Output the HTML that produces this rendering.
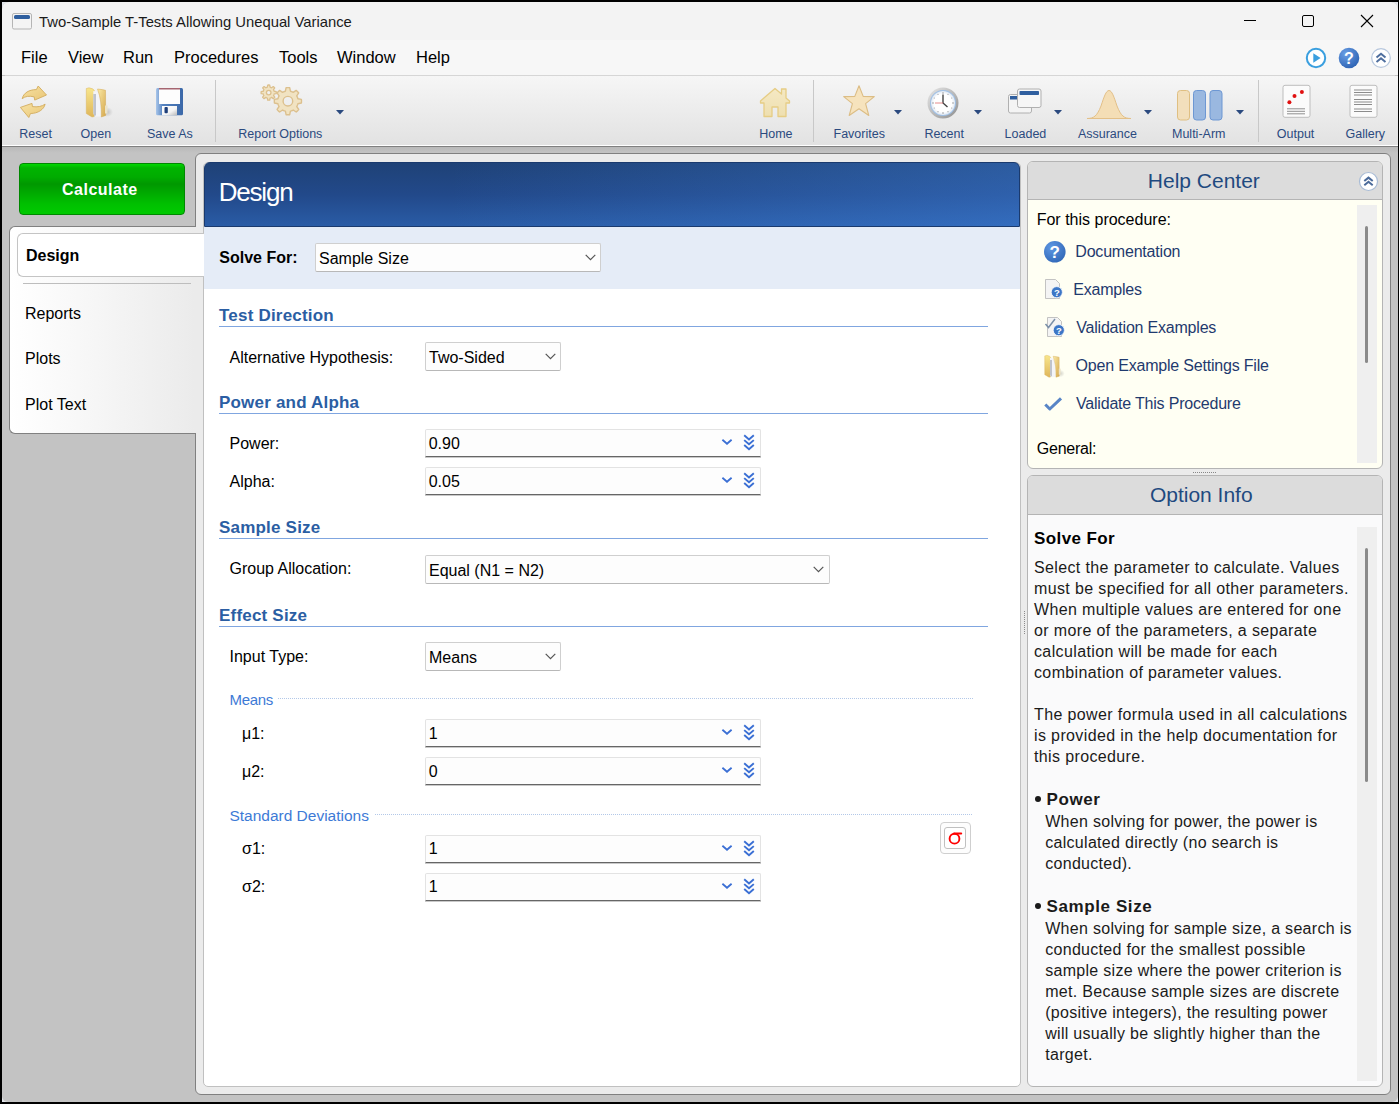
<!DOCTYPE html>
<html><head><meta charset="utf-8">
<style>
*{margin:0;padding:0;box-sizing:border-box}
html,body{width:1399px;height:1104px;overflow:hidden;background:#000}
body{font-family:"Liberation Sans",sans-serif;position:relative;color:#000}
.a{position:absolute}
.t{position:absolute;white-space:nowrap;line-height:1}
svg{overflow:visible}
</style></head><body>
<div class="a" style="left:2px;top:2px;width:1396px;height:1100px;background:#e2e5ea"></div>
<div class="a" style="left:2px;top:2px;width:1396px;height:1100px;background:#c3c3c3;border-top-left-radius:7px;border-top-right-radius:7px;border-bottom-left-radius:6px;border-bottom-right-radius:6px"></div>
<div class="a" style="left:2px;top:2px;width:1396px;height:38px;background:#f3f3f3;border-top-left-radius:7px;border-top-right-radius:7px"></div>
<div class="a" style="left:2px;top:40px;width:1396px;height:35px;background:#f7f7f7"></div>
<div class="a" style="left:5px;top:75px;width:1390px;height:1px;background:#d6d6d6"></div>
<div class="a" style="left:2px;top:76px;width:1396px;height:69px;background:linear-gradient(#f6f6f6,#e2e2e2)"></div>
<div class="a" style="left:2px;top:145px;width:1396px;height:1px;background:#ffffff"></div>
<div class="a" style="left:2px;top:146px;width:1396px;height:1px;background:#808080"></div>
<div class="a" style="left:2px;top:147px;width:1396px;height:6px;background:linear-gradient(#b9b9b9,#c3c3c3)"></div>
<div class="a" style="left:215px;top:80px;width:1px;height:62px;background:#c8c8c8"></div>
<div class="a" style="left:813px;top:80px;width:1px;height:62px;background:#c8c8c8"></div>
<div class="a" style="left:1258px;top:80px;width:1px;height:62px;background:#c8c8c8"></div>
<div class="t" style="left:39px;top:15.00px;font-size:14.8px;color:#1a1a1a;">Two-Sample T-Tests Allowing Unequal Variance</div>
<svg class="a" style="left:12px;top:13px" width="20" height="17" viewBox="0 0 20 17"><rect x="0.5" y="0.5" width="19" height="15.5" rx="1.5" fill="#f4f4f4" stroke="#b5b5b5"/><rect x="2" y="2" width="16" height="4" rx="1.5" fill="#2f5f9f"/></svg>
<div class="a" style="left:1244px;top:20px;width:12px;height:1px;background:#000"></div>
<div class="a" style="left:1302px;top:15px;width:12px;height:12px;border:1px solid #000;border-radius:2px"></div>
<svg class="a" style="left:1360px;top:14px" width="14" height="14" viewBox="0 0 14 14"><path d="M1 1L13 13M13 1L1 13" stroke="#000" stroke-width="1.1"/></svg>
<div class="t" style="left:21px;top:49.00px;font-size:16.5px;color:#000;">File</div>
<div class="t" style="left:68px;top:49.00px;font-size:16.5px;color:#000;">View</div>
<div class="t" style="left:123px;top:49.00px;font-size:16.5px;color:#000;">Run</div>
<div class="t" style="left:174px;top:49.00px;font-size:16.5px;color:#000;">Procedures</div>
<div class="t" style="left:279px;top:49.00px;font-size:16.5px;color:#000;">Tools</div>
<div class="t" style="left:337px;top:49.00px;font-size:16.5px;color:#000;">Window</div>
<div class="t" style="left:416px;top:49.00px;font-size:16.5px;color:#000;">Help</div>
<svg class="a" style="left:1305px;top:47px" width="22" height="22" viewBox="0 0 22 22"><circle cx="11" cy="11" r="9.2" fill="#fff" stroke="#3a9fdf" stroke-width="2"/><path d="M8.3 6.3L15.6 11L8.3 15.7Z" fill="#3a9fdf"/></svg>
<svg class="a" style="left:1338px;top:47px" width="22" height="22" viewBox="0 0 22 22"><defs><radialGradient id="hg" cx="0.35" cy="0.3" r="0.8"><stop offset="0" stop-color="#6a9fe6"/><stop offset="1" stop-color="#2a5fb0"/></radialGradient></defs><circle cx="11" cy="11" r="10.3" fill="url(#hg)"/><text x="11" y="16.5" text-anchor="middle" font-family="Liberation Sans" font-weight="bold" font-size="16" fill="#fff">?</text></svg>
<svg class="a" style="left:1370px;top:47px" width="22" height="22" viewBox="0 0 22 22"><circle cx="11" cy="11" r="9.3" fill="#fff" stroke="#b7c7dd" stroke-width="1.2"/><path d="M6.5 10.5L11 6.8L15.5 10.5M6.5 15L11 11.3L15.5 15" fill="none" stroke="#4f6f9f" stroke-width="2"/></svg>
<div class="t" style="left:19.3px;top:128.00px;font-size:12.5px;color:#2b4a7f;">Reset</div>
<div class="t" style="left:80.5px;top:128.00px;font-size:12.5px;color:#2b4a7f;">Open</div>
<div class="t" style="left:147px;top:128.00px;font-size:12.5px;color:#2b4a7f;">Save As</div>
<div class="t" style="left:238.3px;top:128.00px;font-size:12.5px;color:#2b4a7f;">Report Options</div>
<div class="t" style="left:759.2px;top:128.00px;font-size:12.5px;color:#2b4a7f;">Home</div>
<div class="t" style="left:833.5px;top:128.00px;font-size:12.5px;color:#2b4a7f;">Favorites</div>
<div class="t" style="left:924.4px;top:128.00px;font-size:12.5px;color:#2b4a7f;">Recent</div>
<div class="t" style="left:1004.6px;top:128.00px;font-size:12.5px;color:#2b4a7f;">Loaded</div>
<div class="t" style="left:1077.9px;top:128.00px;font-size:12.5px;color:#2b4a7f;">Assurance</div>
<div class="t" style="left:1172px;top:128.00px;font-size:12.5px;color:#2b4a7f;">Multi-Arm</div>
<div class="t" style="left:1276.8px;top:128.00px;font-size:12.5px;color:#2b4a7f;">Output</div>
<div class="t" style="left:1345.5px;top:128.00px;font-size:12.5px;color:#2b4a7f;">Gallery</div>
<svg class="a" style="left:336px;top:109.5px" width="8" height="5" viewBox="0 0 8 5"><path d="M0 0H8L4 4.5Z" fill="#2b4a7f"/></svg>
<svg class="a" style="left:893.5px;top:109.5px" width="8" height="5" viewBox="0 0 8 5"><path d="M0 0H8L4 4.5Z" fill="#2b4a7f"/></svg>
<svg class="a" style="left:973.6px;top:109.5px" width="8" height="5" viewBox="0 0 8 5"><path d="M0 0H8L4 4.5Z" fill="#2b4a7f"/></svg>
<svg class="a" style="left:1053.6px;top:109.5px" width="8" height="5" viewBox="0 0 8 5"><path d="M0 0H8L4 4.5Z" fill="#2b4a7f"/></svg>
<svg class="a" style="left:1143.6px;top:109.5px" width="8" height="5" viewBox="0 0 8 5"><path d="M0 0H8L4 4.5Z" fill="#2b4a7f"/></svg>
<svg class="a" style="left:1236px;top:109.5px" width="8" height="5" viewBox="0 0 8 5"><path d="M0 0H8L4 4.5Z" fill="#2b4a7f"/></svg>
<svg class="a" style="left:15px;top:82px" width="40" height="40" viewBox="0 0 40 40">
<defs><linearGradient id="rg" x1="0" y1="0" x2="1" y2="1"><stop offset="0" stop-color="#f7e2a4"/><stop offset="1" stop-color="#e9c676"/></linearGradient></defs>
<path d="M7.2 16.7C8.5 11 14 7.6 21.4 7.6L23.2 4L31.5 13L19.7 18.1L19.2 14.9C14.5 13.6 10 14.2 7.2 16.7Z" fill="url(#rg)" stroke="#d2ac5c" stroke-width="0.9" stroke-linejoin="round"/>
<path d="M30.1 22.1C29 27.5 23 31.5 15.5 31.5L13.8 35.5L5.4 25.4L17 21.4L17.4 24.6C22.5 25.3 27 24.5 30.1 22.1Z" fill="url(#rg)" stroke="#d2ac5c" stroke-width="0.9" stroke-linejoin="round"/>
</svg>
<svg class="a" style="left:80px;top:82px" width="40" height="40" viewBox="0 0 40 40">
<defs><linearGradient id="fg1" x1="0" y1="0" x2="0" y2="1"><stop offset="0" stop-color="#f8e68c"/><stop offset="1" stop-color="#dfb65a"/></linearGradient>
<linearGradient id="fg2" x1="0" y1="0" x2="1" y2="1"><stop offset="0" stop-color="#fbeaa6"/><stop offset="1" stop-color="#d5a84e"/></linearGradient>
<radialGradient id="fsh" cx="0.5" cy="0.5" r="0.5"><stop offset="0" stop-color="#000" stop-opacity="0.18"/><stop offset="1" stop-color="#000" stop-opacity="0"/></radialGradient></defs>
<ellipse cx="27" cy="30" rx="6" ry="5" fill="url(#fsh)"/>
<path d="M6.3 6.5L9 5.8Q13.5 6.5 14.3 8.5L14.3 34.5L12 35L6.3 31.5Z" fill="url(#fg1)" stroke="#d9b35e" stroke-width="0.5"/>
<path d="M13.3 9Q17.5 9 19.5 12.5L21 34.5L14.5 34.5L13.3 31Z" fill="#f3f4f8"/>
<path d="M13.3 12L16 12L16 33L14.5 34.5L13.3 31Z" fill="#bfc3cc"/>
<path d="M17.5 7Q23.5 7.6 25.5 8.3L25.7 33.5L21.3 35Q22 19 17.5 7Z" fill="url(#fg2)" stroke="#d2a955" stroke-width="0.5"/>
<rect x="25" y="23.5" width="2.5" height="8" fill="#ece3c8"/>
</svg>
<svg class="a" style="left:155px;top:87px" width="29" height="30" viewBox="0 0 29 30">
<defs><linearGradient id="sg" x1="0" y1="0" x2="1" y2="0"><stop offset="0" stop-color="#a9c6ea"/><stop offset="0.25" stop-color="#5583c0"/><stop offset="1" stop-color="#3b68a8"/></linearGradient>
<linearGradient id="shg" x1="0" y1="0" x2="1" y2="1"><stop offset="0" stop-color="#ffffff"/><stop offset="0.6" stop-color="#f4f4f4"/><stop offset="1" stop-color="#b8b8b8"/></linearGradient></defs>
<path d="M1 2.5Q1 1 2.5 1H26.5Q28 1 28 2.5V26.8Q28 28.3 26.5 28.3H2.5Q1 28.3 1 26.8Z" fill="url(#sg)"/>
<rect x="4" y="1" width="21" height="16" fill="#fdfdfd"/>
<rect x="4" y="1" width="21" height="1.5" fill="#a56570"/>
<rect x="7" y="19" width="15" height="9.3" fill="url(#shg)"/>
<rect x="9.5" y="20" width="3.3" height="6.2" rx="1" fill="#1e3f7a"/>
</svg>
<svg class="a" style="left:250px;top:78px" width="60" height="45" viewBox="0 0 60 45"><path d="M17.70 7.07 L18.22 7.02 L19.18 7.02 L19.70 7.07 L20.06 9.17 L20.59 9.33 L21.09 9.54 L21.58 9.80 L23.32 8.56 L23.72 8.89 L24.41 9.58 L24.74 9.98 L23.50 11.72 L23.76 12.21 L23.97 12.71 L24.13 13.24 L26.23 13.60 L26.28 14.12 L26.28 15.08 L26.23 15.60 L24.13 15.96 L23.97 16.49 L23.76 16.99 L23.50 17.48 L24.74 19.22 L24.41 19.62 L23.72 20.31 L23.32 20.64 L21.58 19.40 L21.09 19.66 L20.59 19.87 L20.06 20.03 L19.70 22.13 L19.18 22.18 L18.22 22.18 L17.70 22.13 L17.34 20.03 L16.81 19.87 L16.31 19.66 L15.82 19.40 L14.08 20.64 L13.68 20.31 L12.99 19.62 L12.66 19.22 L13.90 17.48 L13.64 16.99 L13.43 16.49 L13.27 15.96 L11.17 15.60 L11.12 15.08 L11.12 14.12 L11.17 13.60 L13.27 13.24 L13.43 12.71 L13.64 12.21 L13.90 11.72 L12.66 9.98 L12.99 9.58 L13.68 8.89 L14.08 8.56 L15.82 9.80 L16.31 9.54 L16.81 9.33 L17.34 9.17Z M21.00 14.60 A2.3 2.3 0 1 0 16.40 14.60 A2.3 2.3 0 1 0 21.00 14.60Z" fill="#f1e3c2" fill-rule="evenodd" stroke="#dcc08e" stroke-width="1.3" stroke-linejoin="round"/><path d="M36.10 9.72 L37.03 9.63 L38.77 9.63 L39.70 9.72 L40.40 13.21 L41.37 13.50 L42.30 13.89 L43.20 14.37 L46.16 12.40 L46.88 12.99 L48.11 14.22 L48.70 14.94 L46.73 17.90 L47.21 18.80 L47.60 19.73 L47.89 20.70 L51.38 21.40 L51.47 22.33 L51.47 24.07 L51.38 25.00 L47.89 25.70 L47.60 26.67 L47.21 27.60 L46.73 28.50 L48.70 31.46 L48.11 32.18 L46.88 33.41 L46.16 34.00 L43.20 32.03 L42.30 32.51 L41.37 32.90 L40.40 33.19 L39.70 36.68 L38.77 36.77 L37.03 36.77 L36.10 36.68 L35.40 33.19 L34.43 32.90 L33.50 32.51 L32.60 32.03 L29.64 34.00 L28.92 33.41 L27.69 32.18 L27.10 31.46 L29.07 28.50 L28.59 27.60 L28.20 26.67 L27.91 25.70 L24.42 25.00 L24.33 24.07 L24.33 22.33 L24.42 21.40 L27.91 20.70 L28.20 19.73 L28.59 18.80 L29.07 17.90 L27.10 14.94 L27.69 14.22 L28.92 12.99 L29.64 12.40 L32.60 14.37 L33.50 13.89 L34.43 13.50 L35.40 13.21Z M42.70 23.20 A4.8 4.8 0 1 0 33.10 23.20 A4.8 4.8 0 1 0 42.70 23.20Z" fill="#f1e3c2" fill-rule="evenodd" stroke="#dcc08e" stroke-width="1.4" stroke-linejoin="round"/></svg>
<svg class="a" style="left:759px;top:87px" width="33" height="32" viewBox="0 0 33 32">
<defs><linearGradient id="hmg" x1="0" y1="0" x2="0" y2="1"><stop offset="0" stop-color="#f5e9c4"/><stop offset="1" stop-color="#eedfb0"/></linearGradient></defs>
<path d="M1.5 14L16 1.5L22.5 7V2H27V11L30.5 14V16H27V29.5H19V20H13V29.5H5V16H1.5Z" fill="url(#hmg)" stroke="#e6cd85" stroke-width="1.3" stroke-linejoin="round"/>
</svg>
<svg class="a" style="left:842px;top:84px" width="34" height="34" viewBox="0 0 34 34">
<path d="M17 1.8L21.2 12.4L32.3 12.6L23.6 19.6L26.8 31.5L17 24.8L7.2 31.5L10.4 19.6L1.7 12.6L12.8 12.4Z" fill="#f6e3bd" stroke="#dcbd85" stroke-width="1.1" stroke-linejoin="round"/>
</svg>
<svg class="a" style="left:926px;top:86px" width="34" height="34" viewBox="0 0 34 34">
<defs><radialGradient id="cg" cx="0.5" cy="0.5" r="0.5"><stop offset="0.75" stop-color="#ffffff"/><stop offset="1" stop-color="#dfe8f3"/></radialGradient>
<linearGradient id="crg" x1="0" y1="0" x2="1" y2="1"><stop offset="0" stop-color="#e8e8e8"/><stop offset="1" stop-color="#8e8e8e"/></linearGradient></defs>
<circle cx="17" cy="17" r="15.5" fill="url(#crg)"/>
<circle cx="17" cy="17" r="13" fill="#9fc0e6"/>
<circle cx="17" cy="17" r="12" fill="url(#cg)"/>
<g fill="#9a9a9a"><circle cx="17" cy="7" r="0.8"/><circle cx="27" cy="17" r="0.8"/><circle cx="17" cy="27" r="0.8"/><circle cx="7" cy="17" r="0.8"/><circle cx="22" cy="8.3" r="0.6"/><circle cx="25.7" cy="12" r="0.6"/><circle cx="25.7" cy="22" r="0.6"/><circle cx="22" cy="25.7" r="0.6"/><circle cx="12" cy="25.7" r="0.6"/><circle cx="8.3" cy="22" r="0.6"/><circle cx="8.3" cy="12" r="0.6"/><circle cx="12" cy="8.3" r="0.6"/></g>
<path d="M17 8.5V17L21.5 21" fill="none" stroke="#444" stroke-width="1.4"/>
<path d="M17 17H9" stroke="#e07070" stroke-width="0.8"/>
</svg>
<svg class="a" style="left:1007px;top:88px" width="36" height="27" viewBox="0 0 36 27">
<rect x="1.5" y="6.5" width="23" height="18.5" rx="2" fill="#f4f4f4" stroke="#b0b0b0" stroke-width="1"/>
<rect x="3" y="8" width="20" height="3.5" fill="#2f5f9f"/>
<rect x="10.5" y="1" width="23.5" height="18.5" rx="2" fill="#f6f6f6" stroke="#b0b0b0" stroke-width="1"/>
<rect x="12.5" y="3" width="19.5" height="4" rx="0.8" fill="#2f5f9f"/>
</svg>
<svg class="a" style="left:1086px;top:89px" width="46" height="31" viewBox="0 0 46 31">
<path d="M1 29.5C8 29.5 11 27 15 17C18 8 20 1.5 23 1.5C26 1.5 28 8 31 17C35 27 38 29.5 45 29.5Z" fill="#f4deb6" stroke="#e3c088" stroke-width="1"/>
</svg>
<svg class="a" style="left:1176px;top:89px" width="48" height="32" viewBox="0 0 48 32">
<rect x="1.5" y="1.5" width="12" height="29.5" rx="3" fill="#f2dfbc" stroke="#dfbf82" stroke-width="1"/>
<rect x="17.5" y="1.5" width="12" height="29.5" rx="3" fill="#9ab8e0" stroke="#6d97d3" stroke-width="1"/>
<rect x="34" y="1.5" width="12" height="29.5" rx="3" fill="#9ab8e0" stroke="#6d97d3" stroke-width="1"/>
</svg>
<svg class="a" style="left:1282px;top:84px" width="29" height="35" viewBox="0 0 29 35">
<rect x="1" y="1.3" width="27" height="32" rx="2" fill="#fbfbfb" stroke="#bdbdbd" stroke-width="1"/>
<circle cx="7.4" cy="18.3" r="2" fill="#e01010"/><circle cx="12.5" cy="12" r="2" fill="#e01010"/><circle cx="19.9" cy="8" r="2" fill="#e01010"/>
<rect x="5" y="24.3" width="18" height="1" fill="#909090"/><rect x="5" y="26.8" width="18" height="1" fill="#909090"/><rect x="5" y="29.3" width="18" height="1" fill="#909090"/>
</svg>
<svg class="a" style="left:1349px;top:84px" width="29" height="35" viewBox="0 0 29 35">
<rect x="1" y="1.3" width="27" height="32" rx="2" fill="#fbfbfb" stroke="#bdbdbd" stroke-width="1"/>
<g fill="#8c8c8c"><rect x="5" y="5.5" width="18" height="1"/><rect x="5" y="8" width="18" height="1"/><rect x="5" y="10.5" width="18" height="1"/><rect x="5" y="15" width="18" height="1"/><rect x="5" y="17.5" width="18" height="1"/><rect x="5" y="20" width="18" height="1"/><rect x="5" y="24.5" width="18" height="1"/><rect x="5" y="27" width="18" height="1"/></g>
</svg>
<div class="a" style="left:19px;top:163px;width:166px;height:52px;background:linear-gradient(#00d800 0px,#00b400 4px,#00ac00 13px,#009800 20px,#00a600 27px,#00c000 40px,#00ca00 50px);border:1px solid #008800;border-radius:4px"></div>
<div class="t" style="left:62px;top:182.00px;font-size:16px;color:#ffffff;font-weight:bold;letter-spacing:0.5px">Calculate</div>
<div class="a" style="left:195px;top:153px;width:1196px;height:942px;background:#ebebeb;border:1px solid #808080;border-radius:6px"></div>
<div class="a" style="left:9px;top:226px;width:195px;height:208px;background:linear-gradient(90deg,#ffffff 0%,#f7f7f7 40%,#ebebeb 95%);border:1px solid #808080;border-right:none;border-radius:6px 0 0 6px"></div>
<div class="a" style="left:196px;top:226px;width:8px;height:1px;background:#ebebeb"></div>
<div class="a" style="left:196px;top:433px;width:8px;height:1px;background:#ebebeb"></div>
<div class="a" style="left:203px;top:162px;width:818px;height:925px;background:#ffffff;border:1px solid #c0c0c0;border-radius:5px"></div>
<div class="a" style="left:17px;top:233px;width:188px;height:44px;background:#ffffff;border:1px solid #c4c4c4;border-right:none;border-radius:6px 0 0 6px"></div>
<div class="a" style="left:203px;top:234px;width:2px;height:42px;background:#ffffff"></div>
<div class="a" style="left:23px;top:283px;width:168px;height:1px;background:#bdbdbd"></div>
<div class="t" style="left:26px;top:248.00px;font-size:16px;color:#000;font-weight:bold;">Design</div>
<div class="t" style="left:25px;top:306.00px;font-size:16px;color:#000;">Reports</div>
<div class="t" style="left:25px;top:351.00px;font-size:16px;color:#000;">Plots</div>
<div class="t" style="left:25px;top:397.00px;font-size:16px;color:#000;">Plot Text</div>
<div class="a" style="left:204px;top:162px;width:816px;height:65px;background:linear-gradient(90deg,rgba(60,130,230,0) 0%,rgba(60,130,230,0) 30%,rgba(70,140,235,0.35) 100%),linear-gradient(#1f4277 0%,#22498a 50%,#2a5ca6 100%);border:1px solid #1a3a6e;border-radius:6px 6px 0 0"></div>
<div class="t" style="left:218.7px;top:179.00px;font-size:26px;color:#ffffff;letter-spacing:-1.2px">Design</div>
<div class="a" style="left:204px;top:227px;width:816px;height:62px;background:#e5ecf7"></div>
<div class="t" style="left:219.3px;top:250.00px;font-size:16px;color:#000;font-weight:bold;">Solve For:</div>
<div class="a" style="left:315px;top:243px;width:286px;height:29px;background:#fdfdfd;border:1px solid #cfcfcf;border-bottom-color:#b8b8b8;border-radius:2px"></div>
<div class="t" style="left:319px;top:251.00px;font-size:16px;color:#000;">Sample Size</div>
<svg class="a" style="left:585px;top:254.0px" width="11" height="7" viewBox="0 0 11 7"><path d="M0.7 0.8L5.5 5.6L10.3 0.8" fill="none" stroke="#555" stroke-width="1.2"/></svg>
<div class="t" style="left:219px;top:307.00px;font-size:17px;color:#2b5ea3;font-weight:bold;letter-spacing:0.2px">Test Direction</div>
<div class="a" style="left:219px;top:326px;width:769px;height:1px;background:#80a6e0"></div>
<div class="t" style="left:219px;top:394.00px;font-size:17px;color:#2b5ea3;font-weight:bold;letter-spacing:0.2px">Power and Alpha</div>
<div class="a" style="left:219px;top:413px;width:769px;height:1px;background:#80a6e0"></div>
<div class="t" style="left:219px;top:519.00px;font-size:17px;color:#2b5ea3;font-weight:bold;letter-spacing:0.2px">Sample Size</div>
<div class="a" style="left:219px;top:538px;width:769px;height:1px;background:#80a6e0"></div>
<div class="t" style="left:219px;top:607.00px;font-size:17px;color:#2b5ea3;font-weight:bold;letter-spacing:0.2px">Effect Size</div>
<div class="a" style="left:219px;top:626px;width:769px;height:1px;background:#80a6e0"></div>
<div class="t" style="left:229.5px;top:350.00px;font-size:16px;color:#000;">Alternative Hypothesis:</div>
<div class="a" style="left:425px;top:342px;width:136px;height:29px;background:#fdfdfd;border:1px solid #cfcfcf;border-bottom-color:#b8b8b8;border-radius:2px"></div>
<div class="t" style="left:429px;top:350.00px;font-size:16px;color:#000;">Two-Sided</div>
<svg class="a" style="left:545px;top:353.0px" width="11" height="7" viewBox="0 0 11 7"><path d="M0.7 0.8L5.5 5.6L10.3 0.8" fill="none" stroke="#555" stroke-width="1.2"/></svg>
<div class="t" style="left:229.5px;top:436.00px;font-size:16px;color:#000;">Power:</div>
<div class="a" style="left:425px;top:429px;width:336px;height:28px;background:#fdfdfd;border:1px solid #e3e3e3;border-bottom:1px solid #666;border-radius:2px 2px 0 0;box-shadow:0 1px 0 #c9c9c9"></div>
<div class="t" style="left:428.7px;top:436.00px;font-size:16px;color:#000;">0.90</div>
<svg class="a" style="left:721px;top:438px" width="12" height="7" viewBox="0 0 12 7"><path d="M1.4 1.8L6 5.8L10.6 1.8" fill="none" stroke="#3b6fd4" stroke-width="1.8"/></svg>
<svg class="a" style="left:743px;top:434px" width="12" height="17" viewBox="0 0 12 17"><path d="M1.2 1.2L6 5.4L10.8 1.2M1.2 6.1L6 10.3L10.8 6.1M1.2 11L6 15.2L10.8 11" fill="none" stroke="#3a6fd4" stroke-width="1.9"/></svg>
<div class="t" style="left:229.5px;top:474.00px;font-size:16px;color:#000;">Alpha:</div>
<div class="a" style="left:425px;top:467px;width:336px;height:28px;background:#fdfdfd;border:1px solid #e3e3e3;border-bottom:1px solid #666;border-radius:2px 2px 0 0;box-shadow:0 1px 0 #c9c9c9"></div>
<div class="t" style="left:428.7px;top:474.00px;font-size:16px;color:#000;">0.05</div>
<svg class="a" style="left:721px;top:476px" width="12" height="7" viewBox="0 0 12 7"><path d="M1.4 1.8L6 5.8L10.6 1.8" fill="none" stroke="#3b6fd4" stroke-width="1.8"/></svg>
<svg class="a" style="left:743px;top:472px" width="12" height="17" viewBox="0 0 12 17"><path d="M1.2 1.2L6 5.4L10.8 1.2M1.2 6.1L6 10.3L10.8 6.1M1.2 11L6 15.2L10.8 11" fill="none" stroke="#3a6fd4" stroke-width="1.9"/></svg>
<div class="t" style="left:229.5px;top:561.00px;font-size:16px;color:#000;">Group Allocation:</div>
<div class="a" style="left:425px;top:555px;width:405px;height:29px;background:#fdfdfd;border:1px solid #cfcfcf;border-bottom-color:#b8b8b8;border-radius:2px"></div>
<div class="t" style="left:429px;top:563.00px;font-size:16px;color:#000;">Equal (N1 = N2)</div>
<svg class="a" style="left:813px;top:566.0px" width="11" height="7" viewBox="0 0 11 7"><path d="M0.7 0.8L5.5 5.6L10.3 0.8" fill="none" stroke="#555" stroke-width="1.2"/></svg>
<div class="t" style="left:229.5px;top:649.00px;font-size:16px;color:#000;">Input Type:</div>
<div class="a" style="left:425px;top:642px;width:136px;height:29px;background:#fdfdfd;border:1px solid #cfcfcf;border-bottom-color:#b8b8b8;border-radius:2px"></div>
<div class="t" style="left:429px;top:650.00px;font-size:16px;color:#000;">Means</div>
<svg class="a" style="left:545px;top:653.0px" width="11" height="7" viewBox="0 0 11 7"><path d="M0.7 0.8L5.5 5.6L10.3 0.8" fill="none" stroke="#555" stroke-width="1.2"/></svg>
<div class="t" style="left:229.5px;top:692.00px;font-size:15px;color:#3d7ad6;letter-spacing:-0.3px">Means</div>
<div class="a" style="left:278px;top:698px;width:695px;height:1px;background-image:linear-gradient(90deg,#b3c8e8 50%,transparent 50%);background-size:2px 1px"></div>
<div class="t" style="left:242px;top:726.00px;font-size:16px;color:#000;">&mu;1:</div>
<div class="a" style="left:425px;top:719px;width:336px;height:28px;background:#fdfdfd;border:1px solid #e3e3e3;border-bottom:1px solid #666;border-radius:2px 2px 0 0;box-shadow:0 1px 0 #c9c9c9"></div>
<div class="t" style="left:428.7px;top:726.00px;font-size:16px;color:#000;">1</div>
<svg class="a" style="left:721px;top:728px" width="12" height="7" viewBox="0 0 12 7"><path d="M1.4 1.8L6 5.8L10.6 1.8" fill="none" stroke="#3b6fd4" stroke-width="1.8"/></svg>
<svg class="a" style="left:743px;top:724px" width="12" height="17" viewBox="0 0 12 17"><path d="M1.2 1.2L6 5.4L10.8 1.2M1.2 6.1L6 10.3L10.8 6.1M1.2 11L6 15.2L10.8 11" fill="none" stroke="#3a6fd4" stroke-width="1.9"/></svg>
<div class="t" style="left:242px;top:764.00px;font-size:16px;color:#000;">&mu;2:</div>
<div class="a" style="left:425px;top:757px;width:336px;height:28px;background:#fdfdfd;border:1px solid #e3e3e3;border-bottom:1px solid #666;border-radius:2px 2px 0 0;box-shadow:0 1px 0 #c9c9c9"></div>
<div class="t" style="left:428.7px;top:764.00px;font-size:16px;color:#000;">0</div>
<svg class="a" style="left:721px;top:766px" width="12" height="7" viewBox="0 0 12 7"><path d="M1.4 1.8L6 5.8L10.6 1.8" fill="none" stroke="#3b6fd4" stroke-width="1.8"/></svg>
<svg class="a" style="left:743px;top:762px" width="12" height="17" viewBox="0 0 12 17"><path d="M1.2 1.2L6 5.4L10.8 1.2M1.2 6.1L6 10.3L10.8 6.1M1.2 11L6 15.2L10.8 11" fill="none" stroke="#3a6fd4" stroke-width="1.9"/></svg>
<div class="t" style="left:229.4px;top:808.00px;font-size:15.5px;color:#3d7ad6;">Standard Deviations</div>
<div class="a" style="left:375px;top:814px;width:598px;height:1px;background-image:linear-gradient(90deg,#b3c8e8 50%,transparent 50%);background-size:2px 1px"></div>
<div class="t" style="left:242px;top:841.00px;font-size:16px;color:#000;">&sigma;1:</div>
<div class="a" style="left:425px;top:835px;width:336px;height:28px;background:#fdfdfd;border:1px solid #e3e3e3;border-bottom:1px solid #666;border-radius:2px 2px 0 0;box-shadow:0 1px 0 #c9c9c9"></div>
<div class="t" style="left:428.7px;top:841.00px;font-size:16px;color:#000;">1</div>
<svg class="a" style="left:721px;top:844px" width="12" height="7" viewBox="0 0 12 7"><path d="M1.4 1.8L6 5.8L10.6 1.8" fill="none" stroke="#3b6fd4" stroke-width="1.8"/></svg>
<svg class="a" style="left:743px;top:840px" width="12" height="17" viewBox="0 0 12 17"><path d="M1.2 1.2L6 5.4L10.8 1.2M1.2 6.1L6 10.3L10.8 6.1M1.2 11L6 15.2L10.8 11" fill="none" stroke="#3a6fd4" stroke-width="1.9"/></svg>
<div class="t" style="left:242px;top:879.00px;font-size:16px;color:#000;">&sigma;2:</div>
<div class="a" style="left:425px;top:873px;width:336px;height:28px;background:#fdfdfd;border:1px solid #e3e3e3;border-bottom:1px solid #666;border-radius:2px 2px 0 0;box-shadow:0 1px 0 #c9c9c9"></div>
<div class="t" style="left:428.7px;top:879.00px;font-size:16px;color:#000;">1</div>
<svg class="a" style="left:721px;top:882px" width="12" height="7" viewBox="0 0 12 7"><path d="M1.4 1.8L6 5.8L10.6 1.8" fill="none" stroke="#3b6fd4" stroke-width="1.8"/></svg>
<svg class="a" style="left:743px;top:878px" width="12" height="17" viewBox="0 0 12 17"><path d="M1.2 1.2L6 5.4L10.8 1.2M1.2 6.1L6 10.3L10.8 6.1M1.2 11L6 15.2L10.8 11" fill="none" stroke="#3a6fd4" stroke-width="1.9"/></svg>
<div class="a" style="left:939.5px;top:822.3px;width:31.3px;height:31.5px;background:#fdfdfd;border:1px solid #cfcfcf;border-radius:4px"></div>
<div class="a" style="left:944px;top:827px;width:21.7px;height:21.7px;background:#fff;border:1.6px solid #c0c0c0;border-radius:3px"></div>
<svg class="a" style="left:946px;top:830px" width="18" height="16" viewBox="0 0 18 16"><circle cx="8.5" cy="8.7" r="4.9" fill="none" stroke="#ff0000" stroke-width="1.9"/><path d="M8 3.6H15.2" stroke="#ff0000" stroke-width="2" stroke-linecap="round"/></svg>
<div class="a" style="left:1027px;top:161px;width:356px;height:308px;background:#fffff3;border:1px solid #b4b4b4;border-radius:6px;overflow:hidden"></div>
<div class="a" style="left:1028px;top:162px;width:354px;height:38px;background:#dcdcdc;border-bottom:1px solid #b4b4b4;border-radius:5px 5px 0 0"></div>
<div class="t" style="left:1147.8px;top:170.00px;font-size:21px;color:#1f4a80;">Help Center</div>
<svg class="a" style="left:1358px;top:171px" width="21" height="21" viewBox="0 0 21 21"><circle cx="10.5" cy="10.5" r="9" fill="#fff" stroke="#a9bcd6" stroke-width="1.2"/><path d="M6.3 10L10.5 6.6L14.7 10M6.3 14.2L10.5 10.8L14.7 14.2" fill="none" stroke="#4a6a9a" stroke-width="2"/></svg>
<div class="a" style="left:1357px;top:205px;width:20px;height:258px;background:#efefef"></div>
<div class="a" style="left:1365px;top:226px;width:3px;height:137px;background:#8a8a8a;border-radius:1.5px"></div>
<div class="t" style="left:1036.7px;top:212.00px;font-size:16px;color:#000;">For this procedure:</div>
<div class="t" style="left:1075.3px;top:244.00px;font-size:16px;color:#1f3a6e;letter-spacing:-0.2px">Documentation</div>
<div class="t" style="left:1073.2px;top:282.00px;font-size:16px;color:#1f3a6e;letter-spacing:-0.2px">Examples</div>
<div class="t" style="left:1076.2px;top:320.00px;font-size:16px;color:#1f3a6e;letter-spacing:-0.2px">Validation Examples</div>
<div class="t" style="left:1075.6px;top:358.00px;font-size:16px;color:#1f3a6e;letter-spacing:-0.2px">Open Example Settings File</div>
<div class="t" style="left:1076px;top:396.00px;font-size:16px;color:#1f3a6e;letter-spacing:-0.2px">Validate This Procedure</div>
<div class="t" style="left:1036.8px;top:441.00px;font-size:16px;color:#000;letter-spacing:-0.25px">General:</div>
<svg class="a" style="left:1043px;top:240px" width="24" height="24" viewBox="0 0 24 24"><defs><radialGradient id="dg" cx="0.35" cy="0.3" r="0.8"><stop offset="0" stop-color="#5e97e2"/><stop offset="1" stop-color="#2f66b6"/></radialGradient></defs><circle cx="11.8" cy="11.8" r="10.8" fill="url(#dg)"/><text x="11.8" y="17.8" text-anchor="middle" font-family="Liberation Sans" font-weight="bold" font-size="17" fill="#fff">?</text></svg>
<svg class="a" style="left:1043px;top:278px" width="24" height="24" viewBox="0 0 24 24"><path d="M2.5 1.5H12.5L16.5 5.5V20.5H2.5Z" fill="#f4f4f4" stroke="#bcbcbc" stroke-width="0.9"/><circle cx="13.8" cy="14.2" r="5.6" fill="#3c76c6" stroke="#fff" stroke-width="0.8"/><text x="13.8" y="17.8" text-anchor="middle" font-family="Liberation Sans" font-weight="bold" font-size="9.5" fill="#fff">?</text></svg>
<svg class="a" style="left:1045px;top:316px" width="24" height="24" viewBox="0 0 24 24"><path d="M2.5 1.5H12.5L16.5 5.5V20.5H2.5Z" fill="#f4f4f4" stroke="#bcbcbc" stroke-width="0.9"/><path d="M0.5 8L3.5 11.5L10 3" fill="none" stroke="#7a8fa8" stroke-width="1.5"/><circle cx="13.8" cy="14.2" r="5.6" fill="#3c76c6" stroke="#fff" stroke-width="0.8"/><text x="13.8" y="17.8" text-anchor="middle" font-family="Liberation Sans" font-weight="bold" font-size="9.5" fill="#fff">?</text></svg>
<svg class="a" style="left:1039.6px;top:350.6px" width="30" height="30" viewBox="0 0 40 40">
<ellipse cx="27" cy="30" rx="6" ry="5" fill="url(#fsh)"/>
<path d="M6.3 6.5L9 5.8Q13.5 6.5 14.3 8.5L14.3 34.5L12 35L6.3 31.5Z" fill="url(#fg1)" stroke="#d9b35e" stroke-width="0.5"/>
<path d="M13.3 9Q17.5 9 19.5 12.5L21 34.5L14.5 34.5L13.3 31Z" fill="#f3f4f8"/>
<path d="M13.3 12L16 12L16 33L14.5 34.5L13.3 31Z" fill="#bfc3cc"/>
<path d="M17.5 7Q23.5 7.6 25.5 8.3L25.7 33.5L21.3 35Q22 19 17.5 7Z" fill="url(#fg2)" stroke="#d2a955" stroke-width="0.5"/>
<rect x="25" y="23.5" width="2.5" height="8" fill="#ece3c8"/>
</svg>
<svg class="a" style="left:1043px;top:396px" width="21" height="16" viewBox="0 0 21 16"><path d="M2.3 8.5L6.8 13L18 2.3" fill="none" stroke="#5885c6" stroke-width="3" stroke-linejoin="round"/></svg>
<div class="a" style="left:1024px;top:611px;width:1px;height:24px;background-image:linear-gradient(#8c8c8c 50%,transparent 50%);background-size:1px 2px"></div>
<div class="a" style="left:1193px;top:472px;width:23px;height:1px;background-image:linear-gradient(90deg,#888 50%,transparent 50%);background-size:2px 1px"></div>
<div class="a" style="left:1027px;top:475px;width:356px;height:612px;background:#fafafb;border:1px solid #b4b4b4;border-radius:6px;overflow:hidden"></div>
<div class="a" style="left:1028px;top:476px;width:354px;height:39px;background:#dcdcdc;border-bottom:1px solid #b4b4b4;border-radius:5px 5px 0 0"></div>
<div class="t" style="left:1149.9px;top:484.00px;font-size:21px;color:#1f4a80;">Option Info</div>
<div class="a" style="left:1357px;top:527px;width:20px;height:554px;background:#efefef"></div>
<div class="a" style="left:1365px;top:548px;width:3px;height:234px;background:#8a8a8a;border-radius:1.5px"></div>
<div class="t" style="left:1034px;top:530.00px;font-size:17px;color:#000;font-weight:bold;letter-spacing:0.4px">Solve For</div>
<div class="t" style="left:1034px;top:560.00px;font-size:16px;color:#1a1a1a;letter-spacing:0.37px">Select the parameter to calculate. Values</div>
<div class="t" style="left:1034px;top:581.00px;font-size:16px;color:#1a1a1a;letter-spacing:0.37px">must be specified for all other parameters.</div>
<div class="t" style="left:1034px;top:602.00px;font-size:16px;color:#1a1a1a;letter-spacing:0.37px">When multiple values are entered for one</div>
<div class="t" style="left:1034px;top:623.00px;font-size:16px;color:#1a1a1a;letter-spacing:0.37px">or more of the parameters, a separate</div>
<div class="t" style="left:1034px;top:644.00px;font-size:16px;color:#1a1a1a;letter-spacing:0.37px">calculation will be made for each</div>
<div class="t" style="left:1034px;top:665.00px;font-size:16px;color:#1a1a1a;letter-spacing:0.37px">combination of parameter values.</div>
<div class="t" style="left:1034px;top:707.00px;font-size:16px;color:#1a1a1a;letter-spacing:0.37px">The power formula used in all calculations</div>
<div class="t" style="left:1034px;top:728.00px;font-size:16px;color:#1a1a1a;letter-spacing:0.37px">is provided in the help documentation for</div>
<div class="t" style="left:1034px;top:749.00px;font-size:16px;color:#1a1a1a;letter-spacing:0.37px">this procedure.</div>
<div class="a" style="left:1034.5px;top:795.5px;width:6px;height:6px;background:#1a1a1a;border-radius:50%"></div>
<div class="t" style="left:1046.5px;top:791.00px;font-size:17px;color:#1a1a1a;font-weight:bold;letter-spacing:0.6px">Power</div>
<div class="t" style="left:1045.2px;top:814.00px;font-size:16px;color:#1a1a1a;letter-spacing:0.3px">When solving for power, the power is</div>
<div class="t" style="left:1045.2px;top:835.00px;font-size:16px;color:#1a1a1a;letter-spacing:0.3px">calculated directly (no search is</div>
<div class="t" style="left:1045.2px;top:856.00px;font-size:16px;color:#1a1a1a;letter-spacing:0.3px">conducted).</div>
<div class="a" style="left:1034.5px;top:902.5px;width:6px;height:6px;background:#1a1a1a;border-radius:50%"></div>
<div class="t" style="left:1046.5px;top:898.00px;font-size:17px;color:#1a1a1a;font-weight:bold;letter-spacing:0.6px">Sample Size</div>
<div class="t" style="left:1045.2px;top:921.00px;font-size:16px;color:#1a1a1a;letter-spacing:0.3px">When solving for sample size, a search is</div>
<div class="t" style="left:1045.2px;top:942.00px;font-size:16px;color:#1a1a1a;letter-spacing:0.3px">conducted for the smallest possible</div>
<div class="t" style="left:1045.2px;top:963.00px;font-size:16px;color:#1a1a1a;letter-spacing:0.3px">sample size where the power criterion is</div>
<div class="t" style="left:1045.2px;top:984.00px;font-size:16px;color:#1a1a1a;letter-spacing:0.3px">met. Because sample sizes are discrete</div>
<div class="t" style="left:1045.2px;top:1005.00px;font-size:16px;color:#1a1a1a;letter-spacing:0.3px">(positive integers), the resulting power</div>
<div class="t" style="left:1045.2px;top:1026.00px;font-size:16px;color:#1a1a1a;letter-spacing:0.3px">will usually be slightly higher than the</div>
<div class="t" style="left:1045.2px;top:1047.00px;font-size:16px;color:#1a1a1a;letter-spacing:0.3px">target.</div>
</body></html>
